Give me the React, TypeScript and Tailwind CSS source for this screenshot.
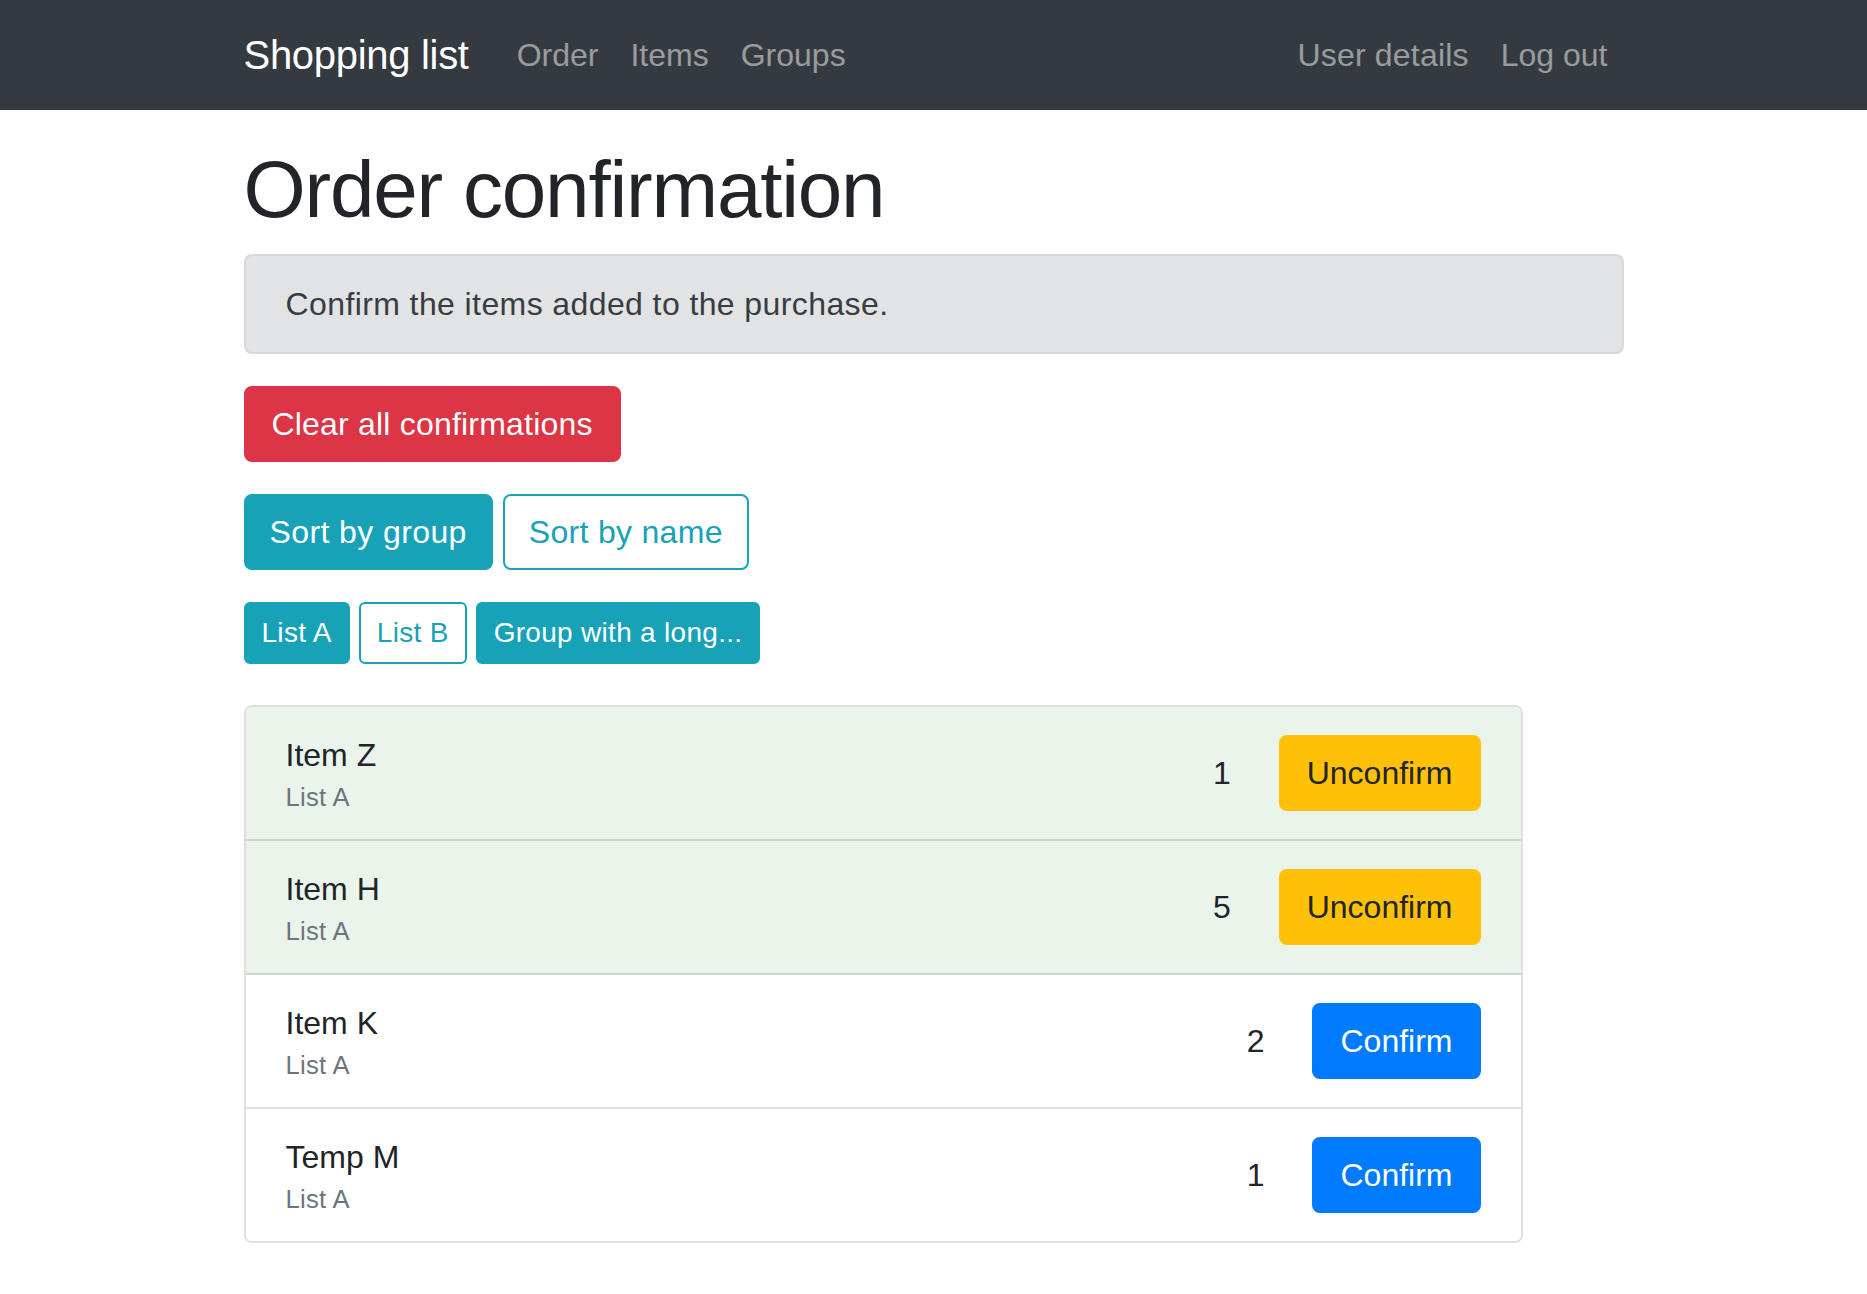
import React from "react";

type Item = { name: string; group: string; qty: number; confirmed: boolean };

const items: Item[] = [
  { name: "Item Z", group: "List A", qty: 1, confirmed: true },
  { name: "Item H", group: "List A", qty: 5, confirmed: true },
  { name: "Item K", group: "List A", qty: 2, confirmed: false },
  { name: "Temp M", group: "List A", qty: 1, confirmed: false },
];

export default function App() {
  return (
    <div className="min-h-screen bg-white font-['Liberation_Sans',Arial,sans-serif] text-[#212529]">
      <nav className="h-[110px] bg-[#343a40]">
        <div className="mx-auto flex h-full w-[1380px] items-center">
          <span className="mr-[32px] text-[40px] leading-[60px] tracking-[-0.3px] text-white">Shopping list</span>
          <div className="flex items-center">
            <span className="px-[16px] text-[32px] leading-[48px] text-white/50">Order</span>
            <span className="px-[16px] text-[32px] leading-[48px] text-white/50">Items</span>
            <span className="px-[16px] text-[32px] leading-[48px] text-white/50">Groups</span>
          </div>
          <div className="ml-auto flex items-center">
            <span className="px-[16px] text-[32px] leading-[48px] tracking-[0.2px] text-white/50">User details</span>
            <span className="px-[16px] text-[32px] leading-[48px] text-white/50">Log out</span>
          </div>
        </div>
      </nav>

      <main className="mx-auto w-[1380px] pt-[32px]">
        <h1 className="mb-[16px] text-[80px] font-medium leading-[96px] tracking-[-1.2px] text-[#212529]">Order confirmation</h1>

        <div className="mb-[32px] rounded-[8px] border-2 border-[#d6d8db] bg-[#e2e3e5] px-[40px] py-[24px] text-[32px] leading-[48px] tracking-[0.4px] text-[#383d41]">
          Confirm the items added to the purchase.
        </div>

        <div className="mb-[32px]">
          <button className="rounded-[8px] border-2 border-[#dc3545] bg-[#dc3545] px-[26px] py-[12px] text-[32px] leading-[48px] tracking-[0.2px] text-white">
            Clear all confirmations
          </button>
        </div>

        <div className="mb-[32px] flex gap-[10px]">
          <button className="rounded-[8px] border-2 border-[#17a2b8] bg-[#17a2b8] px-[24px] py-[12px] text-[32px] leading-[48px] tracking-[0.4px] text-white">
            Sort by group
          </button>
          <button className="rounded-[8px] border-2 border-[#17a2b8] bg-white px-[24px] py-[12px] text-[32px] leading-[48px] tracking-[0.3px] text-[#17a2b8]">
            Sort by name
          </button>
        </div>

        <div className="flex gap-[9px]">
          <button className="rounded-[6px] border-2 border-[#17a2b8] bg-[#17a2b8] px-[16px] py-[8px] text-[28px] leading-[42px] tracking-[0.3px] text-white">
            List A
          </button>
          <button className="rounded-[6px] border-2 border-[#17a2b8] bg-white px-[16px] py-[8px] text-[28px] leading-[42px] tracking-[0.3px] text-[#17a2b8]">
            List B
          </button>
          <button className="rounded-[6px] border-2 border-[#17a2b8] bg-[#17a2b8] px-[16px] py-[8px] text-[28px] leading-[42px] tracking-[0.3px] text-white">
            Group with a long...
          </button>
        </div>

        <div className="mt-[41px] w-[1279px] overflow-hidden rounded-[8px] border-2 border-[rgba(0,0,0,0.125)] divide-y-2 divide-[rgba(0,0,0,0.125)]">
          {items.map((it) => (
            <div
              key={it.name}
              className={
                "flex items-center px-[40px] py-[24px] " +
                (it.confirmed ? "bg-[#eaf4eb]" : "bg-white")
              }
            >
              <div className="flex flex-col">
                <span className="text-[32px] leading-[48px] text-[#212529]">{it.name}</span>
                <span className="text-[25.6px] leading-[36px] tracking-[0.3px] text-[#6c757d]">{it.group}</span>
              </div>
              <div className="ml-auto flex items-center">
                <span className="mr-[48px] text-[32px] leading-[48px] text-[#212529]">{it.qty}</span>
                {it.confirmed ? (
                  <button className="rounded-[8px] border-2 border-[#ffc107] bg-[#ffc107] px-[26px] py-[12px] text-[32px] leading-[48px] text-[#212529]">
                    Unconfirm
                  </button>
                ) : (
                  <button className="rounded-[8px] border-2 border-[#007bff] bg-[#007bff] px-[26px] py-[12px] text-[32px] leading-[48px] text-white">
                    Confirm
                  </button>
                )}
              </div>
            </div>
          ))}
        </div>
      </main>
    </div>
  );
}
